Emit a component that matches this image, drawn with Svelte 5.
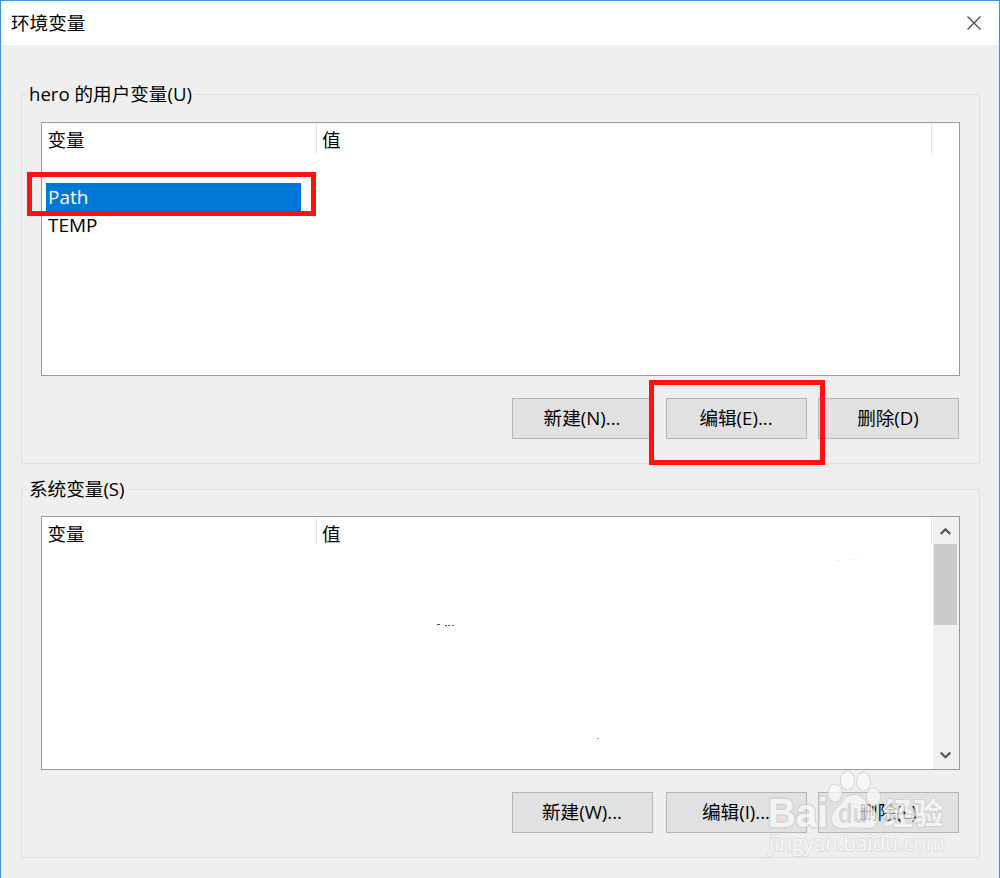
<script lang="ts">
	type Action = { label: string; highlighted?: boolean };
	type Group = {
		title: string;
		rows: string[];
		selected?: string;
		scrollable: boolean;
		actions: Action[];
	};

	const groups: Group[] = [
		{
			title: 'hero 的用户变量(U)',
			rows: ['Path', 'TEMP'],
			selected: 'Path',
			scrollable: false,
			actions: [
				{ label: '新建(N)...' },
				{ label: '编辑(E)...', highlighted: true },
				{ label: '删除(D)' }
			]
		},
		{
			title: '系统变量(S)',
			rows: [],
			scrollable: true,
			actions: [{ label: '新建(W)...' }, { label: '编辑(I)...' }, { label: '删除(L)' }]
		}
	];
</script>

<div class="window">
	<header class="title-bar">
		<span class="title">环境变量</span>
		<button class="close" aria-label="关闭">
			<svg width="14" height="14" viewBox="0 0 14 14">
				<path d="M0.5 0.5L13.5 13.5M13.5 0.5L0.5 13.5" />
			</svg>
		</button>
	</header>

	<main class="content">
		{#each groups as group}
			<fieldset class="group">
				<legend>{group.title}</legend>
				<div class="list">
					<div class="table">
						<div class="list-header" class:short={group.scrollable}>
							<div class="column name">变量</div>
							<div class="column value">值</div>
						</div>
						{#each group.rows as row}
							<div class="row" class:selected={row === group.selected}>
								<span>{row}</span>
								{#if row === group.selected}
									<div class="marker row-marker"></div>
								{/if}
							</div>
						{/each}
						{#if group.scrollable}
							<svg class="specks" width="892" height="252" viewBox="42 517 892 252">
								<path d="M437 624.5h3M445 625.5h2M448 625.5h2M452.5 625.5h1.5" stroke="#555" />
								<path d="M597 738.5h1.5" stroke="#5577aa" />
								<path d="M836 560.5h4M850 559.5h8" stroke="#f2f2f2" />
							</svg>
						{/if}
					</div>
					{#if group.scrollable}
						<div class="scrollbar">
							<svg class="arrow" width="12" height="8" viewBox="0 0 12 8">
								<path d="M1.7 7L6.5 2.2L11.3 7" />
							</svg>
							<div class="thumb"></div>
							<svg class="arrow down" width="12" height="8" viewBox="0 0 12 8">
								<path d="M1.7 1.5L6.5 6.3L11.3 1.5" />
							</svg>
						</div>
					{/if}
				</div>
				<div class="actions">
					{#each group.actions as action}
						<button class="action">
							{action.label}
							{#if action.highlighted}
								<span class="marker action-marker"></span>
							{/if}
						</button>
					{/each}
				</div>
			</fieldset>
		{/each}
	</main>

	<svg class="watermark" width="190" height="96" viewBox="762 766 190 96">
		<g class="paw">
			<ellipse cx="835" cy="793" rx="6.5" ry="8.5" />
			<ellipse cx="847.5" cy="780.5" rx="6.5" ry="9" />
			<ellipse cx="863.5" cy="781.5" rx="6.5" ry="9" />
			<ellipse cx="873.5" cy="797" rx="6.5" ry="8.5" />
			<path
				d="M854 795C848 795 844 799 841 804C837 809 832 811 832 819C832 825 836 828 843 828C848 828 850 827 855 827C860 827 862 828 867 828C874 828 877 825 877 819C877 811 871 809 867 804C864 799 860 795 854 795Z"
			/>
		</g>
		<text class="brand" x="768" y="827" textLength="60" lengthAdjust="spacingAndGlyphs">Bai</text>
		<text class="du" x="838" y="823" textLength="29" lengthAdjust="spacingAndGlyphs">du</text>
		<text class="brand-cn" x="883" y="824" textLength="60">经验</text>
		<text class="site" x="769" y="851" textLength="176" lengthAdjust="spacingAndGlyphs">jingyan.baidu.com</text>
	</svg>
</div>

<style>
	:global(body) {
		margin: 0;
		overflow: hidden;
	}

	.window {
		position: relative;
		display: flex;
		flex-direction: column;
		box-sizing: border-box;
		width: 1000px;
		height: 878px;
		border: 1px solid #3a93dc;
		border-bottom: none;
		background-color: #efefef;
		color: #000;
		font-family: 'Open Sans', 'Noto Sans CJK SC', sans-serif;
		font-size: 18.6px;
	}

	.title-bar {
		display: flex;
		align-items: center;
		justify-content: space-between;
		height: 44px;
		padding: 0 18px 0 10px;
		background-color: #fff;
	}

	.title {
		padding-bottom: 3px;
	}

	.close {
		display: flex;
		padding: 0;
		border: none;
		background: none;
	}

	.close path {
		fill: none;
		stroke: #444;
		stroke-width: 1.2;
	}

	.content {
		display: flex;
		flex-direction: column;
		gap: 13px;
		padding: 37px 19px 0 20px;
	}

	.group {
		box-sizing: border-box;
		height: 382px;
		min-width: 0;
		margin: 0;
		padding: 15px 19px 0;
		border: 1px solid #dfdfdf;
	}

	.group + .group {
		height: 381px;
	}

	.group + .group .list {
		margin-top: -1px;
	}

	legend {
		height: 25px;
		margin-left: -14px;
		padding: 0 3px 0 2px;
		line-height: 23px;
	}

	.list {
		display: flex;
		box-sizing: border-box;
		width: 919px;
		height: 254px;
		border: 1px solid #979aa2;
		background-color: #fff;
	}

	.table {
		position: relative;
		flex: 1;
	}

	.list-header {
		display: flex;
		height: 32px;
		margin-bottom: 28px;
	}

	.list-header.short {
		height: 27px;
	}

	.column {
		box-sizing: border-box;
		border-right: 1px solid #e4e4e4;
		line-height: 33px;
	}

	.name {
		width: 275px;
		padding-left: 5.5px;
	}

	.value {
		width: 615px;
		padding-left: 5px;
	}

	.row {
		position: relative;
		width: 255px;
		height: 28px;
		margin-left: 4px;
		padding-left: 2px;
		box-sizing: border-box;
		font-size: 19px;
		line-height: 28px;
	}

	.selected {
		background-color: #0078d9;
		color: #fff;
	}

	.specks {
		position: absolute;
		top: 0;
		left: 0;
	}

	.specks path {
		fill: none;
	}

	.scrollbar {
		display: flex;
		flex-direction: column;
		align-items: center;
		box-sizing: border-box;
		width: 26px;
		padding: 10px 2px 10px 0;
		background-color: #f0f0f0;
	}

	.thumb {
		width: 23px;
		height: 81px;
		margin-top: 9px;
		background-color: #cbcbcb;
	}

	.arrow {
		overflow: visible;
	}

	.arrow path {
		fill: none;
		stroke: #555;
		stroke-width: 2.2;
	}

	.down {
		margin-top: auto;
	}

	.actions {
		display: flex;
		gap: 12px;
		justify-content: flex-end;
		margin-top: 22px;
		padding-right: 1px;
	}

	.action {
		position: relative;
		width: 141px;
		height: 41px;
		padding: 0 1px 4px 0;
		border: 1px solid #b4b4b4;
		background-color: #e1e1e1;
		color: #000;
		font: inherit;
	}

	.action:first-child {
		margin-right: 1px;
	}

	.action:nth-child(2) {
		margin-right: -1px;
	}

	.marker {
		position: absolute;
		z-index: 1;
		box-sizing: border-box;
		border: 5px solid #ff1111;
		pointer-events: none;
	}

	.row-marker {
		top: -11px;
		left: -19px;
		width: 289px;
		height: 44px;
	}

	.action-marker {
		top: -19px;
		left: -18px;
		width: 176px;
		height: 85px;
	}

	.watermark {
		position: absolute;
		top: 765px;
		left: 761px;
		z-index: 2;
		overflow: visible;
		stroke-linejoin: round;
		opacity: 0.75;
	}

	.paw,
	.watermark text {
		fill: #fafafa;
		stroke: #cfcfcf;
		stroke-width: 2;
		paint-order: stroke;
	}

	.watermark .brand {
		font: bold 40px 'Liberation Sans', sans-serif;
		stroke-width: 3;
	}

	.watermark .du {
		fill: #d4d4d4;
		stroke: none;
		font: bold 27px 'Liberation Sans', sans-serif;
	}

	.watermark .brand-cn {
		font: bold 30px 'Noto Sans CJK SC', sans-serif;
	}

	.watermark .site {
		stroke: #d8d8d8;
		stroke-width: 2;
		font: 22px 'Open Sans', sans-serif;
	}
</style>
